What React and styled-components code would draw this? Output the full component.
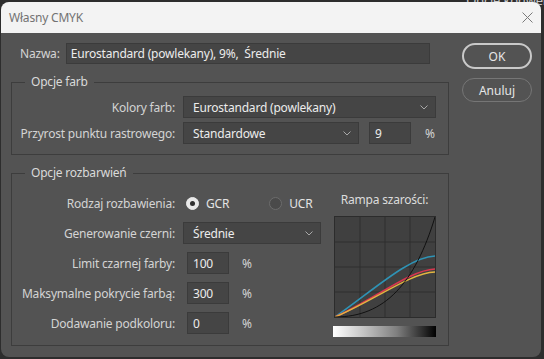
import React from 'react';
import styled, { createGlobalStyle } from 'styled-components';

const GlobalStyle = createGlobalStyle`
  html, body {
    margin: 0;
    padding: 0;
    background: #2b2b2b;
  }
  * {
    box-sizing: border-box;
  }
`;

const Screen = styled.div`
  position: relative;
  width: 544px;
  height: 359px;
  overflow: hidden;
  background: #2d2d2d;
  font-family: "Noto Sans", "Open Sans", sans-serif;
  font-size: 12px;
  letter-spacing: -0.2px;
  color: #d6d6d6;
`;

const BackdropText = styled.div`
  position: absolute;
  top: -9px;
  right: -4px;
  color: #c9c9c9;
  font-size: 13px;
`;

const Window = styled.div`
  position: relative;
  margin: 2px 0 0 1px;
  width: 540px;
  height: 355px;
  border-radius: 8px;
  overflow: hidden;
  background: #535353;
  display: flex;
  flex-direction: column;
`;

const TitleBar = styled.div`
  height: 31px;
  flex: none;
  background: #f3f3f3;
  display: flex;
  align-items: center;
  justify-content: space-between;
  padding: 0 8px 0 8px;
`;

const Title = styled.span`
  color: #727272;
  font-size: 12px;
`;

const Body = styled.div`
  display: flex;
  gap: 13px;
  padding: 10px 0 0 10px;
`;

const Main = styled.div`
  width: 438px;
  display: flex;
  flex-direction: column;
`;

const NameRow = styled.div`
  display: flex;
  align-items: center;
  gap: 6px;
  padding-left: 9px;
  height: 21px;
`;

const Label = styled.span`
  color: #d4d4d4;
  white-space: nowrap;
`;

const Field = styled.div`
  height: ${p => p.$h || 22}px;
  width: ${p => p.$w}px;
  flex: none;
  background: #454545;
  border: 1px solid #3b3b3b;
  color: #ececec;
  display: flex;
  align-items: center;
  padding-left: ${p => p.$pad || 5}px;
  margin-left: ${p => p.$ml || 0}px;
  white-space: pre;
`;

const SelectBox = styled(Field)`
  justify-content: space-between;
  padding-right: 7px;
`;

const Group = styled.fieldset`
  margin: ${p => p.$mt}px 0 0 0;
  padding: ${p => p.$pt}px 0 ${p => p.$pb}px 0;
  border: 1px solid #3d3d3d;
  min-width: 0;
`;

const Legend = styled.legend`
  margin-left: 13px;
  padding: 0 6px;
  line-height: 16px;
  color: #dadada;
`;

const Rows = styled.div`
  display: flex;
  flex-direction: column;
  gap: ${p => p.$gap}px;
`;

const Row = styled.div`
  display: flex;
  align-items: center;
  height: 22px;
`;

const RowLabel = styled.span`
  width: 163px;
  flex: none;
  text-align: right;
  margin-right: 8px;
  color: #d4d4d4;
  white-space: nowrap;
`;

const Percent = styled.span`
  margin-left: ${p => p.$ml}px;
  color: #d4d4d4;
`;

const SplitContent = styled.div`
  display: flex;
  align-items: flex-start;
`;

const RadioOption = styled.label`
  display: flex;
  align-items: center;
  gap: 7px;
  margin-left: ${p => p.$ml}px;
  color: #e4e4e4;
`;

const RadioDot = styled.span`
  width: 13px;
  height: 13px;
  border-radius: 50%;
  display: inline-flex;
  align-items: center;
  justify-content: center;
  background: ${p => (p.$on ? '#e9e9e9' : '#4a4a4a')};
  border: 1px solid ${p => (p.$on ? '#e9e9e9' : '#6c6c6c')};
  &::after {
    content: '';
    width: 5px;
    height: 5px;
    border-radius: 50%;
    background: #2f2f2f;
    display: ${p => (p.$on ? 'block' : 'none')};
  }
`;

const RampColumn = styled.div`
  width: 103px;
  margin-left: 12px;
  display: flex;
  flex-direction: column;
  align-items: center;
`;

const RampTitle = styled.div`
  line-height: 16px;
  color: #dcdcdc;
  white-space: nowrap;
`;

const Graph = styled.div`
  margin-top: 8px;
  width: 102px;
  height: 102px;
  background: #404040;
  border: 1px solid #2c2c2c;
  svg {
    display: block;
  }
`;

const GrayBar = styled.div`
  margin-top: 8px;
  width: 103px;
  height: 11px;
  background: linear-gradient(90deg, #ffffff 0%, #c4c4c4 30%, #7f7f7f 62%, #2a2a2a 88%, #000 100%);
`;

const Buttons = styled.div`
  width: 70px;
  display: flex;
  flex-direction: column;
  gap: 9px;
`;

const Button = styled.button`
  height: ${p => (p.$primary ? 26 : 24)}px;
  border-radius: 13px;
  background: transparent;
  border: ${p => (p.$primary ? '2px solid #c9c9c9' : '1px solid #767676')};
  color: #e6e6e6;
  font-family: inherit;
  font-size: 12px;
  padding: 0;
`;

const Chevron = () => (
  <svg width="8" height="5" viewBox="0 0 8 5">
    <path d="M0.5 0.5 L4 4 L7.5 0.5" fill="none" stroke="#a8a8a8" strokeWidth="1" />
  </svg>
);

const CloseIcon = () => (
  <svg width="11" height="11" viewBox="0 0 11 11">
    <path d="M0.5 0.5 L10.5 10.5 M10.5 0.5 L0.5 10.5" stroke="#7a7a7a" strokeWidth="1" />
  </svg>
);

const Select = ({ w, children }) => (
  <SelectBox $w={w} $pad={9}>
    <span>{children}</span>
    <Chevron />
  </SelectBox>
);

const GrayRamp = () => (
  <svg width="100" height="100" viewBox="0 0 100 100">
    {[25, 50, 75].map(v => (
      <g key={v} stroke="#2e2e2e" strokeWidth="1">
        <line x1={v} y1="0" x2={v} y2="100" />
        <line x1="0" y1={v} x2="100" y2={v} />
      </g>
    ))}
    <path d="M0 100 C40 72 74 40 100 39" fill="none" stroke="#2f93b5" strokeWidth="1.6" />
    <path d="M0 100 C40 82 75 53 100 52" fill="none" stroke="#d9364f" strokeWidth="1.6" />
    <path d="M0 100 C40 83 75 56 100 55" fill="none" stroke="#e2b540" strokeWidth="1.3" />
    <path d="M0 100 C50 100 80 66 100 0" fill="none" stroke="#111" strokeWidth="1" />
  </svg>
);

export default function App() {
  return (
    <Screen>
      <GlobalStyle />
      <BackdropText>Opcje konwer</BackdropText>
      <Window>
        <TitleBar>
          <Title>Własny CMYK</Title>
          <CloseIcon />
        </TitleBar>
        <Body>
          <Main>
            <NameRow>
              <Label>Nazwa:</Label>
              <Field $w={364} $h={21} $pad={4}>Eurostandard (powlekany), 9%,  Średnie</Field>
            </NameRow>

            <Group $mt={10} $pt={6} $pb={10}>
              <Legend>Opcje farb</Legend>
              <Rows $gap={4}>
                <Row>
                  <RowLabel>Kolory farb:</RowLabel>
                  <Select w={253}>Eurostandard (powlekany)</Select>
                </Row>
                <Row>
                  <RowLabel>Przyrost punktu rastrowego:</RowLabel>
                  <Select w={176}>Standardowe</Select>
                  <Field $w={42} $ml={10}>9</Field>
                  <Percent $ml={14}>%</Percent>
                </Row>
              </Rows>
            </Group>

            <Group $mt={10} $pt={11} $pb={8}>
              <Legend>Opcje rozbarwień</Legend>
              <SplitContent>
                <Rows $gap={8}>
                  <Row>
                    <RowLabel>Rodzaj rozbawienia:</RowLabel>
                    <RadioOption $ml={3}>
                      <RadioDot $on />
                      GCR
                    </RadioOption>
                    <RadioOption $ml={40}>
                      <RadioDot />
                      UCR
                    </RadioOption>
                  </Row>
                  <Row>
                    <RowLabel>Generowanie czerni:</RowLabel>
                    <Select w={138}>Średnie</Select>
                  </Row>
                  <Row>
                    <RowLabel>Limit czarnej farby:</RowLabel>
                    <Field $w={42} $ml={4}>100</Field>
                    <Percent $ml={13}>%</Percent>
                  </Row>
                  <Row>
                    <RowLabel>Maksymalne pokrycie farbą:</RowLabel>
                    <Field $w={42} $ml={4}>300</Field>
                    <Percent $ml={13}>%</Percent>
                  </Row>
                  <Row>
                    <RowLabel>Dodawanie podkoloru:</RowLabel>
                    <Field $w={42} $ml={4}>0</Field>
                    <Percent $ml={13}>%</Percent>
                  </Row>
                </Rows>
                <RampColumn>
                  <RampTitle>Rampa szarości:</RampTitle>
                  <Graph>
                    <GrayRamp />
                  </Graph>
                  <GrayBar />
                </RampColumn>
              </SplitContent>
            </Group>
          </Main>
          <Buttons>
            <Button $primary>OK</Button>
            <Button>Anuluj</Button>
          </Buttons>
        </Body>
      </Window>
    </Screen>
  );
}
